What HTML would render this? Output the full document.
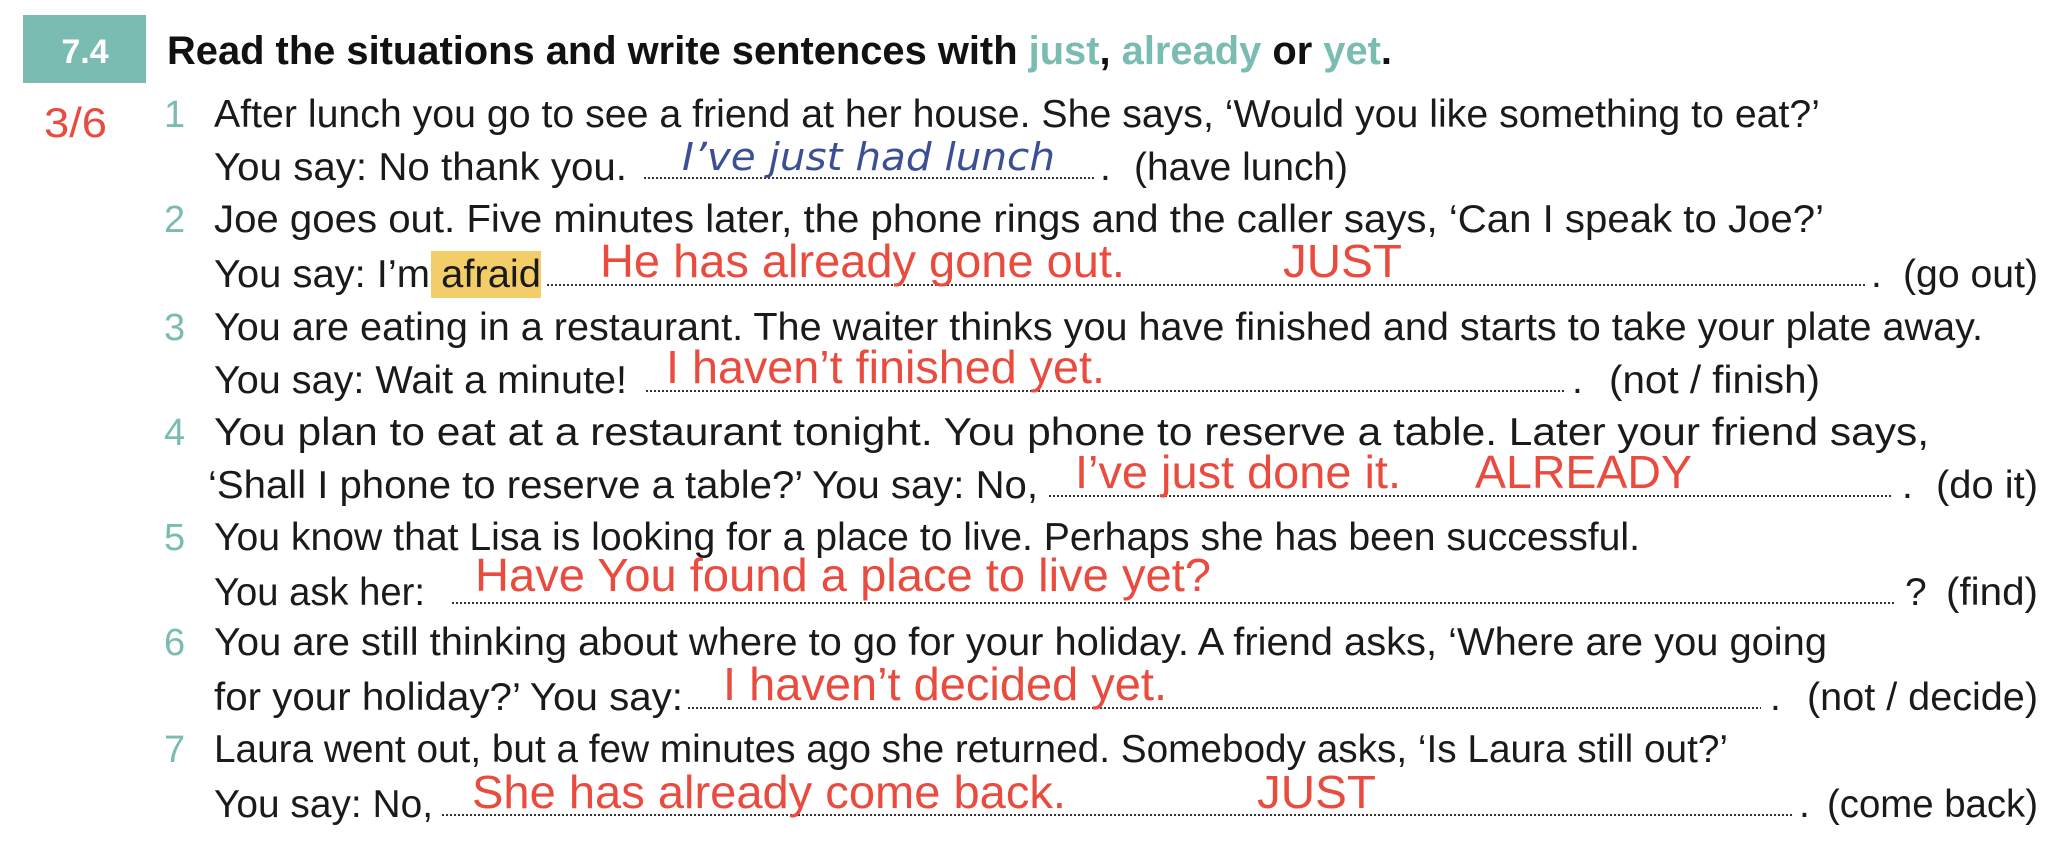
<!DOCTYPE html>
<html><head><meta charset="utf-8"><style>
html,body{margin:0;padding:0;background:#fff;width:2058px;height:858px;overflow:hidden}
svg{display:block}
.t{font-family:"Liberation Sans",sans-serif;font-size:39px;fill:#1a1a1a}
.n{font-family:"Liberation Sans",sans-serif;font-size:38px;fill:#7bbcb2}
.r{font-family:"Liberation Sans",sans-serif;font-size:46px;fill:#e94b3e}
.d{stroke:#333;stroke-width:2;stroke-dasharray:2 2}
</style></head><body>
<svg width="2058" height="858" viewBox="0 0 2058 858" xmlns="http://www.w3.org/2000/svg">
<rect x="23" y="15" width="123" height="68" fill="#7bbcb2"/>
<text x="85" y="63" text-anchor="middle" font-family="Liberation Sans,sans-serif" font-weight="bold" font-size="34" fill="#fff">7.4</text>
<text x="167" y="64" font-family="Liberation Sans,sans-serif" font-weight="bold" font-size="40" fill="#111" textLength="1225" lengthAdjust="spacingAndGlyphs">Read the situations and write sentences with <tspan fill="#7bbcb2">just</tspan>, <tspan fill="#7bbcb2">already</tspan> or <tspan fill="#7bbcb2">yet</tspan>.</text>
<text x="44" y="137" font-family="Liberation Sans,sans-serif" font-size="42" fill="#e94b3e" textLength="63" lengthAdjust="spacingAndGlyphs">3/6</text>

<text class="n" x="164" y="127">1</text>
<text class="n" x="164" y="232">2</text>
<text class="n" x="164" y="340">3</text>
<text class="n" x="164" y="445">4</text>
<text class="n" x="164" y="550">5</text>
<text class="n" x="164" y="655">6</text>
<text class="n" x="164" y="762">7</text>

<text class="t" x="214" y="127" textLength="1606" lengthAdjust="spacingAndGlyphs">After lunch you go to see a friend at her house.  She says, ‘Would you like something to eat?’</text>
<text class="t" x="214" y="180" textLength="413" lengthAdjust="spacingAndGlyphs">You say:   No thank you.</text>
<line class="d" x1="644" y1="178" x2="1095" y2="178"/>
<text class="t" x="1100" y="180">.</text>
<text class="t" x="1134" y="180" textLength="214" lengthAdjust="spacingAndGlyphs">(have lunch)</text>
<text x="682" y="170" font-family="DejaVu Sans,sans-serif" font-size="38" fill="#3b4f94" textLength="373" lengthAdjust="spacingAndGlyphs" font-style="italic">I’ve just had lunch</text>

<text class="t" x="214" y="232" textLength="1610" lengthAdjust="spacingAndGlyphs">Joe goes out.  Five minutes later, the phone rings and the caller says, ‘Can I speak to Joe?’</text>
<rect x="431" y="251" width="110" height="47" fill="#f2cd6a"/>
<text class="t" x="214" y="287" textLength="327" lengthAdjust="spacingAndGlyphs">You say:  I’m afraid</text>
<line class="d" x1="547" y1="285" x2="1866" y2="285"/>
<text class="t" x="1871" y="287">.</text>
<text class="t" x="1903" y="287" textLength="135" lengthAdjust="spacingAndGlyphs">(go out)</text>
<text class="r" x="600" y="277" textLength="525" lengthAdjust="spacingAndGlyphs">He has already gone out.</text>
<text class="r" x="1283" y="277" textLength="119" lengthAdjust="spacingAndGlyphs">JUST</text>

<text class="t" x="214" y="340" textLength="1769" lengthAdjust="spacingAndGlyphs">You are eating in a restaurant.  The waiter thinks you have finished and starts to take your plate away.</text>
<text class="t" x="214" y="393" textLength="413" lengthAdjust="spacingAndGlyphs">You say:  Wait a minute!</text>
<line class="d" x1="646" y1="391" x2="1566" y2="391"/>
<text class="t" x="1572" y="393">.</text>
<text class="t" x="1609" y="393" textLength="211" lengthAdjust="spacingAndGlyphs">(not / finish)</text>
<text class="r" x="666" y="383" textLength="439" lengthAdjust="spacingAndGlyphs">I haven’t finished yet.</text>

<text class="t" x="214" y="445" textLength="1715" lengthAdjust="spacingAndGlyphs">You plan to eat at a restaurant tonight.  You phone to reserve a table.  Later your friend says,</text>
<text class="t" x="208" y="498" textLength="830" lengthAdjust="spacingAndGlyphs">‘Shall I phone to reserve a table?’   You say:  No,</text>
<line class="d" x1="1049" y1="496" x2="1893" y2="496"/>
<text class="t" x="1902" y="498">.</text>
<text class="t" x="1936" y="498" textLength="102" lengthAdjust="spacingAndGlyphs">(do it)</text>
<text class="r" x="1075" y="488" textLength="326" lengthAdjust="spacingAndGlyphs">I’ve just done it.</text>
<text class="r" x="1475" y="488" textLength="217" lengthAdjust="spacingAndGlyphs">ALREADY</text>

<text class="t" x="214" y="550" textLength="1426" lengthAdjust="spacingAndGlyphs">You know that Lisa is looking for a place to live.  Perhaps she has been successful.</text>
<text class="t" x="214" y="605" textLength="211" lengthAdjust="spacingAndGlyphs">You ask her:</text>
<line class="d" x1="452" y1="603" x2="1895" y2="603"/>
<text class="t" x="1905" y="605">?</text>
<text class="t" x="1946" y="605" textLength="92" lengthAdjust="spacingAndGlyphs">(find)</text>
<text class="r" x="475" y="591" textLength="736" lengthAdjust="spacingAndGlyphs">Have You found a place to live yet?</text>

<text class="t" x="214" y="655" textLength="1613" lengthAdjust="spacingAndGlyphs">You are still thinking about where to go for your holiday.  A friend asks, ‘Where are you going</text>
<text class="t" x="214" y="710" textLength="469" lengthAdjust="spacingAndGlyphs">for your holiday?’   You say:</text>
<line class="d" x1="688" y1="708" x2="1761" y2="708"/>
<text class="t" x="1770" y="710">.</text>
<text class="t" x="1807" y="710" textLength="231" lengthAdjust="spacingAndGlyphs">(not / decide)</text>
<text class="r" x="723" y="700" textLength="444" lengthAdjust="spacingAndGlyphs">I haven’t decided yet.</text>

<text class="t" x="214" y="762" textLength="1514" lengthAdjust="spacingAndGlyphs">Laura went out, but a few minutes ago she returned.  Somebody asks, ‘Is Laura still out?’</text>
<text class="t" x="214" y="817" textLength="219" lengthAdjust="spacingAndGlyphs">You say:  No,</text>
<line class="d" x1="442" y1="815" x2="1794" y2="815"/>
<text class="t" x="1799" y="817">.</text>
<text class="t" x="1827" y="817" textLength="211" lengthAdjust="spacingAndGlyphs">(come back)</text>
<text class="r" x="472" y="808" textLength="594" lengthAdjust="spacingAndGlyphs">She has already come back.</text>
<text class="r" x="1257" y="808" textLength="119" lengthAdjust="spacingAndGlyphs">JUST</text>
</svg>
</body></html>
